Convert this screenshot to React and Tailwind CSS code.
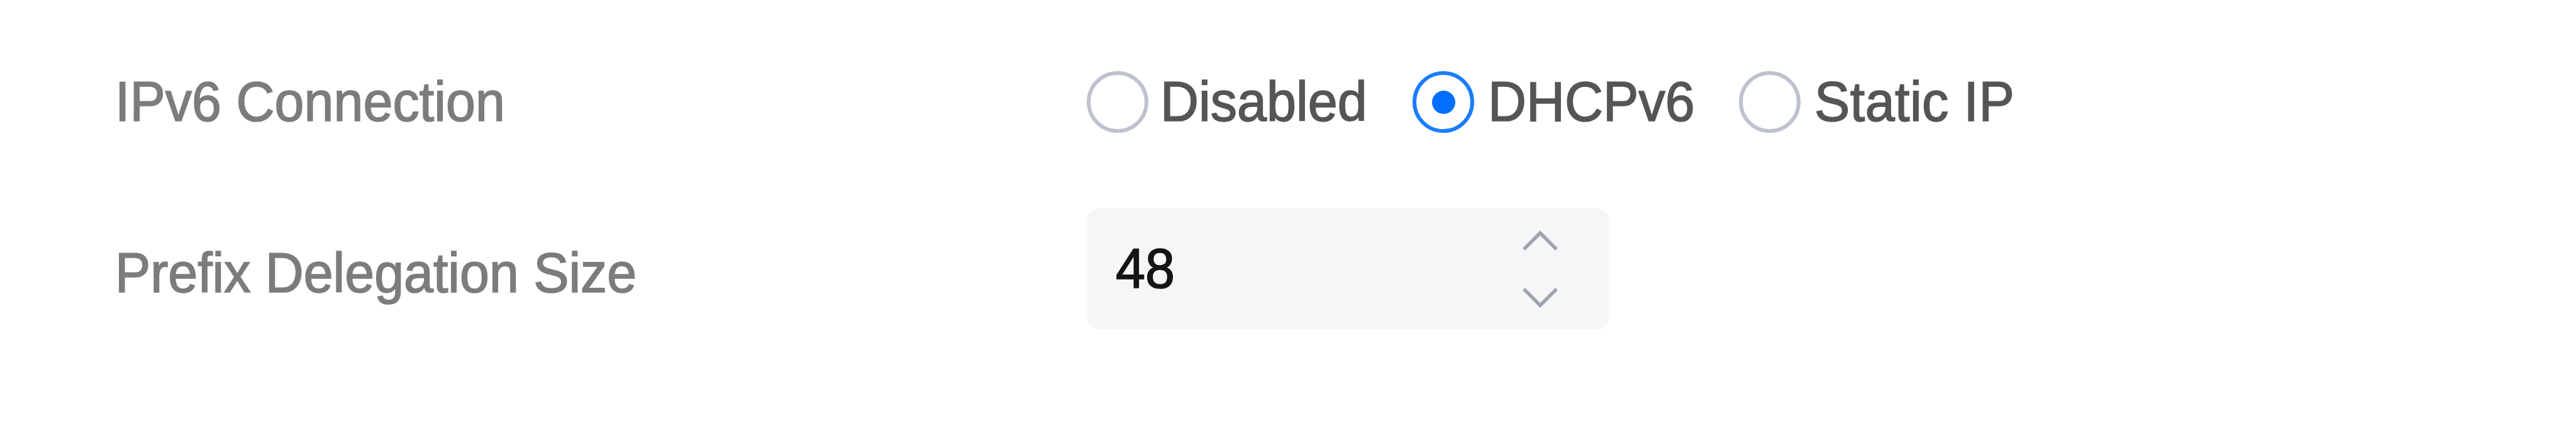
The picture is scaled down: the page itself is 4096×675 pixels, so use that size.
import React, { useState } from 'react';

const OPTIONS = [
  { value: 'disabled', label: 'Disabled', width: 'w-[518px]', gap: 'gap-[19px]' },
  { value: 'dhcpv6', label: 'DHCPv6', width: 'w-[519px]', gap: 'gap-[22px]' },
  { value: 'static', label: 'Static IP', width: 'w-[520px]', gap: 'gap-[22px] tracking-[0.4px]' },
];

const Radio = ({ option, checked, onSelect }) => (
  <button
    type="button"
    role="radio"
    aria-checked={checked}
    onClick={() => onSelect(option.value)}
    className={`${option.width} ${option.gap} flex items-center whitespace-nowrap text-[#555555]`}
  >
    <span className={`size-[98px] shrink-0 rounded-full border-[6.5px] flex items-center justify-center ${checked ? 'border-[#1a7dff]' : 'border-[#bec2ce]'}`}>
      {checked && <span className="size-[37px] rounded-full bg-[#006fff]" />}
    </span>
    <span className="scale-y-[1.045]">{option.label}</span>
  </button>
);

const Chevron = ({ down, onClick }) => (
  <button type="button" onClick={onClick} aria-label={down ? 'Decrease' : 'Increase'}>
    <svg width="60" height="36" viewBox="0 0 60 36" fill="none" stroke="#a1a4af" strokeWidth="5.5">
      <path d={down ? 'M4 4L30 30L56 4' : 'M4 32L30 6L56 32'} />
    </svg>
  </button>
);

const App = () => {
  const [mode, setMode] = useState('dhcpv6');
  const [size, setSize] = useState(48);

  return (
    <div className="h-[675px] w-full overflow-hidden bg-white pt-[113px] pl-[183px] font-['Liberation_Sans',sans-serif] text-[84.5px] leading-[98px] [-webkit-text-stroke:1.6px_currentColor]">
      <div className="flex items-center">
        <div className="w-[1545px] shrink-0 scale-y-[1.045] text-[#7c7c7c]">IPv6 Connection</div>
        <div role="radiogroup" className="flex">
          {OPTIONS.map((option) => (
            <Radio key={option.value} option={option} checked={mode === option.value} onSelect={setMode} />
          ))}
        </div>
      </div>

      <div className="mt-[120px] flex items-center">
        <div className="w-[1546px] shrink-0 scale-y-[1.045] pt-[11px] tracking-[-0.1px] text-[#7c7c7c]">Prefix Delegation Size</div>
        <div className="flex h-[192px] w-[829px] items-center justify-between rounded-[18px] bg-[#f5f6f8] pr-[79px] pl-[45px]">
          <span className="scale-y-[1.045] text-[#141414]">{size}</span>
          <div className="flex flex-col gap-[55px]">
            <Chevron onClick={() => setSize(size + 1)} />
            <Chevron down onClick={() => setSize(size - 1)} />
          </div>
        </div>
      </div>
    </div>
  );
};

export default App;
